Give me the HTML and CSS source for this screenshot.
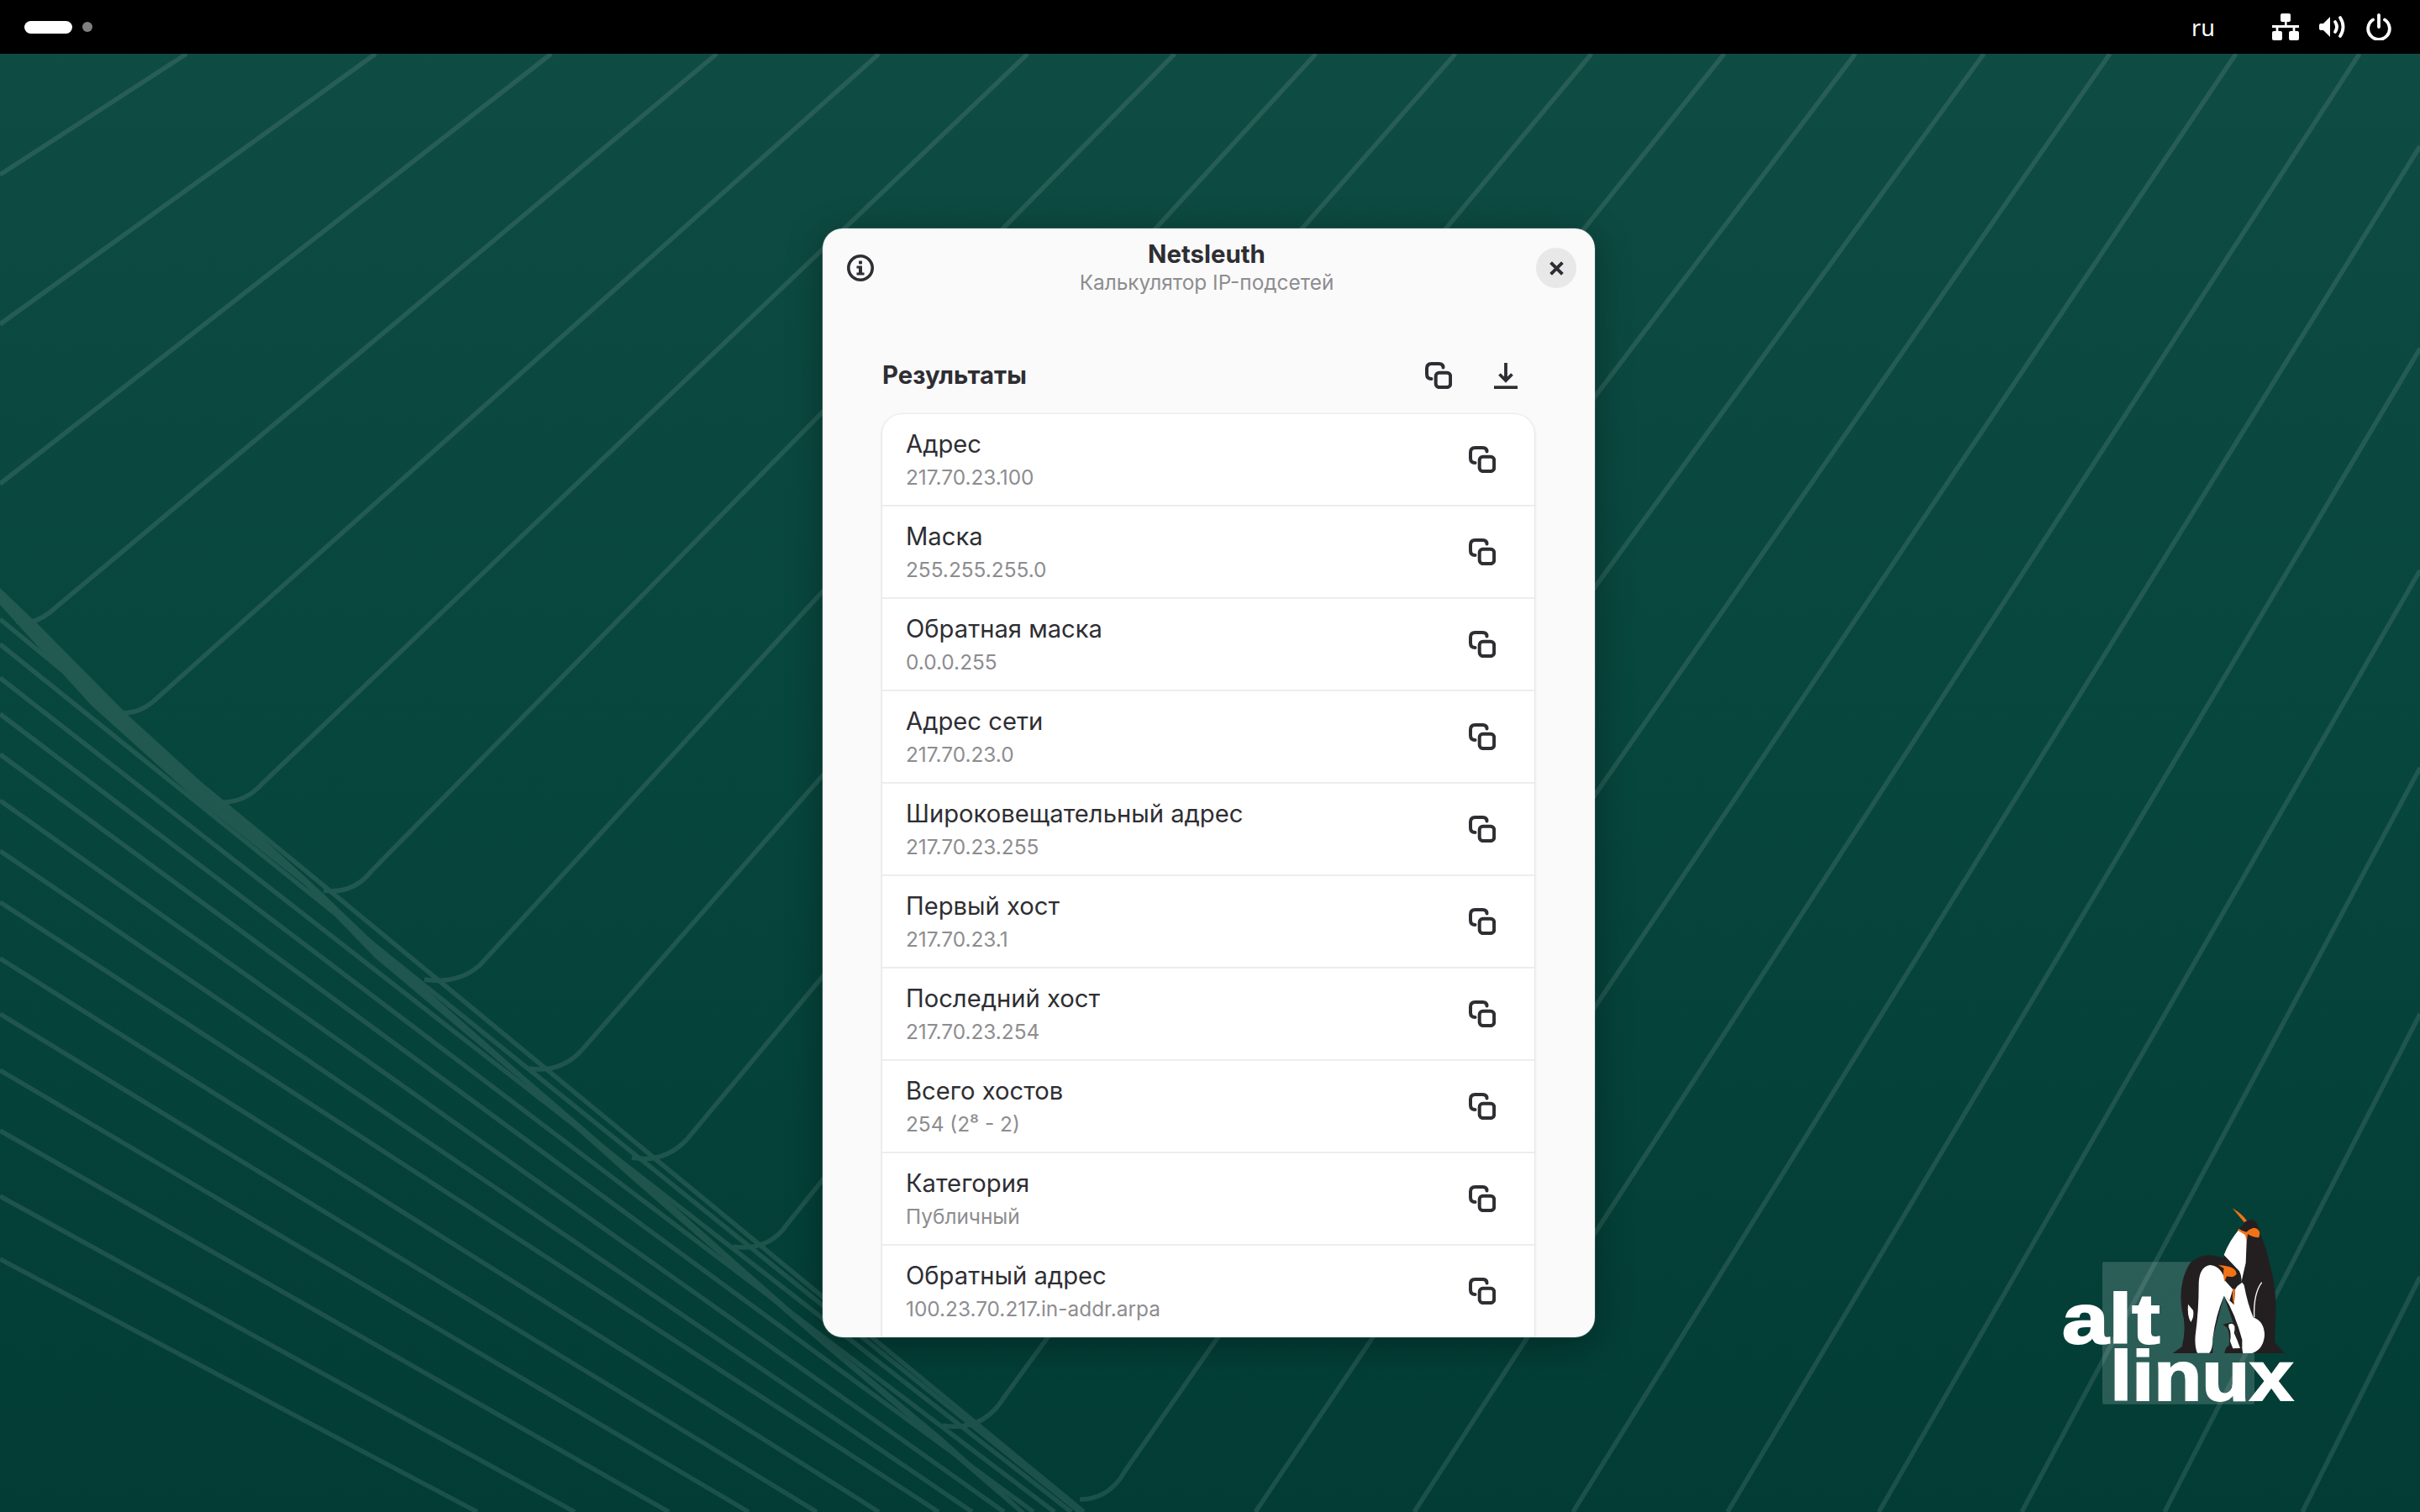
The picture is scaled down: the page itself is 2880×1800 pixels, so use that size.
FILE: index.html
```html
<!DOCTYPE html>
<html lang="ru">

<head>
    <title>Netsleuth</title>
    <meta charset="utf-8">
    <link rel="stylesheet" href="styles.css">
</head>

<body>
    <svg class="icon-defs" width="0" height="0">
        <symbol id="icon-copy" viewBox="0 0 32 32">
            <rect x="12.7" y="12.7" width="17.4" height="17.4" rx="4" fill="none" stroke="currentColor" stroke-width="4" />
            <path d="M7.5 20Q2 20 2 14.5V7.5Q2 2 7.5 2H16.5Q21.5 2 21.5 6.5" fill="none" stroke="currentColor" stroke-width="4" stroke-linecap="round" />
        </symbol>
    </svg>

    <div class="desktop">
        <!-- обои -->
        <svg class="wallpaper" viewBox="0 0 2880 1800">
            <g class="wall-lines">
                <path d="M222 64L0 208" />
                <path d="M447 64L0 386" />
                <path d="M656 64L0 576" />
                <path d="M853 64L58 730Q38 745 20 740" />
                <path d="M1046 64L187 831Q165 852 140 848" />
                <path d="M1223 64L312 933Q290 958 255 955" />
                <path d="M1398 64L442 1037Q420 1065 385 1060" />
                <path d="M1566 64L571 1149Q545 1172 505 1166" />
                <path d="M1732 64L696 1246Q670 1278 630 1272" />
                <path d="M1894 64L817 1357Q790 1385 752 1378" />
                <path d="M2052 64L937 1457Q915 1490 872 1484" />
                <path d="M2208 64L1076 1555Q1050 1592 1000 1588" />
                <path d="M2361 64L1196 1662Q1170 1705 1122 1697" />
                <path d="M2511 64L1339 1751Q1320 1785 1285 1785" />
                <path d="M2661 64L1494 1800" />
                <path d="M2808 64L1683 1800" />
                <path d="M2880 174L1872 1800" />
                <path d="M2880 415L2056 1800" />
                <path d="M2880 679L2236 1800" />
                <path d="M2880 914L2406 1800" />
                <path d="M2880 1207L2576 1800" />
                <path d="M2880 1520L2740 1800" />
                <path d="M0 1499L568 1800" />
                <path d="M0 1424L684 1800" />
                <path d="M0 1346L796 1800" />
                <path d="M0 1274L891 1800" />
                <path d="M0 1207L972 1800" />
                <path d="M0 1141L1046 1800" />
                <path d="M0 1074L1117 1800" />
                <path d="M0 1013L1157 1800" />
                <path d="M0 953L1195 1800" />
                <path d="M0 898L1230 1800" />
                <path d="M0 850L1255 1800" />
                <path d="M0 807L1275 1800" />
                <path d="M0 767L1285 1800" />
                <path d="M0 737L1290 1800" />
                <polygon class="wall-band" points="0,700 45,743 154,853 268,957 384,1063 464,1140 625,1282 762,1400 880,1505 982,1595 1120,1710 1220,1800 1212,1800 1110,1712 975,1598 872,1508 752,1404 625,1290 446,1140 362,1053 228,947 109,840 0,720" />
            </g>
        </svg>

        <div class="logo">
            <svg class="logo-pic" viewBox="0 0 1020 810">
                <rect class="logo-square" x="246" y="247" width="543" height="508" rx="5" />
                <!-- высокий пингвин -->
                <path class="pg-black" d="M755 105Q790 80 805 125L810 150Q830 190 845 260Q868 340 865 440Q860 520 862 535L897 573H750L680 368V225Q700 170 735 130Z" />
                <path class="pg-white" d="M735 130Q700 170 680 222L735 280Q745 300 742 320L758 250L762 150Z" />
                <path class="pg-white" d="M680 368L712 345L745 320L752 330Q765 400 785 445Q825 460 825 510Q820 560 780 573H745V525Q720 430 680 368Z" />
                <path class="pg-line" d="M815 320Q785 360 788 445" />
                <path class="pg-orange" d="M710 55Q745 75 762 100L752 105Q735 85 710 55Z" />
                <path class="pg-orange" d="M730 130L760 140Q770 130 785 125Q805 125 808 145L805 160Q785 160 765 147L762 170L755 150Q740 140 730 135Z" />
                <!-- передний пингвин -->
                <path class="pg-black" d="M497 573L530 550Q548 480 530 420Q515 320 560 250Q610 205 680 235Q730 265 742 310L720 345L716 400L700 385L680 368L640 520V573Z" />
                <path class="pg-white" d="M630 258Q590 265 590 330Q590 420 578 510Q575 550 585 572H628Q640 560 640 520Q650 440 680 368L700 385L712 345L685 315Q670 260 630 258Z" />
                <path class="pg-white" d="M552 398Q548 440 562 462Q575 440 570 420Z" />
                <path class="pg-orange" d="M660 258Q725 262 725 290Q715 305 690 298L682 318Q675 290 680 270Z" />
                <path class="pg-orange" d="M712 342L720 345L716 400Q708 380 712 342Z" />
                <!-- птенец -->
                <path class="pg-black" d="M676 470L695 465Q715 458 722 475Q725 490 722 497Q740 530 748 573H682Q685 550 698 545Q702 505 692 482Z" />
                <path class="pg-white" d="M697 470Q712 462 718 476Q720 492 716 500Q730 530 738 555L712 556L702 530Q708 500 697 480Z" />
                <text class="logo-text" x="102" y="537" textLength="350" lengthAdjust="spacingAndGlyphs">alt</text>
                <text class="logo-text" x="274" y="742" textLength="654" lengthAdjust="spacingAndGlyphs">linux</text>
            </svg>
        </div>

        <div class="topbar">
            <div class="workspaces">
                <span class="ws-active"></span>
                <span class="ws-dot"></span>
            </div>
            <div class="tray">
                <span class="tray-lang">ru</span>
                <svg class="tray-net" viewBox="0 0 32 32">
                    <rect x="10" y="0" width="12" height="10" rx="2" />
                    <rect x="15" y="10" width="2.6" height="6" />
                    <rect x="0" y="14" width="32" height="3" />
                    <rect x="4.6" y="14" width="2.8" height="8" />
                    <rect x="24.6" y="14" width="2.8" height="8" />
                    <rect x="0" y="21" width="12" height="11" rx="2" />
                    <rect x="20" y="21" width="12" height="11" rx="2" />
                </svg>
                <svg class="tray-sound" viewBox="0 0 32 30">
                    <path class="tray-fill" d="M0 13Q0 11 2 11H5L13 3V27L5 19H2Q0 19 0 17Z" />
                    <path class="tray-stroke" d="M19 9Q23 15 19 21" />
                    <path class="tray-stroke" d="M25 4Q32 15 25 26" />
                </svg>
                <svg class="tray-power" viewBox="0 0 30 32">
                    <path class="tray-stroke" d="M8 7.5A12.8 12.8 0 1 0 22 7.5" />
                    <path class="tray-stroke" d="M15 2V16" />
                </svg>
            </div>
        </div>

        <div class="stage">
            <div class="window">
                <div class="header">
                    <svg class="icon-info" viewBox="0 0 32 32">
                        <circle cx="16" cy="16" r="14.2" fill="none" stroke="currentColor" stroke-width="3.6" />
                        <rect x="14" y="7.5" width="4" height="4" rx="1" fill="currentColor" />
                        <path d="M11.5 13.5H18V21.5H20.5V24.5H11.5V21.5H14V16.5H11.5Z" fill="currentColor" />
                    </svg>
                    <div class="header-title">
                        <div class="app-name">Netsleuth</div>
                        <div class="app-sub">Калькулятор IP-подсетей</div>
                    </div>
                    <div class="btn-close">
                        <svg viewBox="0 0 16 16">
                            <path d="M1.5 1.5L14.5 14.5M14.5 1.5L1.5 14.5" fill="none" stroke="currentColor" stroke-width="3.7" />
                        </svg>
                    </div>
                </div>

                <div class="content">
                    <div class="section-head">
                        <h2 class="section-title">Результаты</h2>
                        <svg class="icon-32 head-copy"><use href="#icon-copy" /></svg>
                        <svg class="icon-32 head-save" viewBox="0 0 32 32">
                            <path d="M16 1V22M8.5 14.5L16 22L23.5 14.5" fill="none" stroke="currentColor" stroke-width="3.8" />
                            <rect x="2" y="28.3" width="28" height="3.7" fill="currentColor" />
                        </svg>
                    </div>

                    <div class="result-list">
                        <div class="result-row">
                            <div class="row-text">
                                <div class="row-title">Адрес</div>
                                <div class="row-sub">217.70.23.100</div>
                            </div>
                            <svg class="icon-32"><use href="#icon-copy" /></svg>
                        </div>
                        <div class="result-row">
                            <div class="row-text">
                                <div class="row-title">Маска</div>
                                <div class="row-sub">255.255.255.0</div>
                            </div>
                            <svg class="icon-32"><use href="#icon-copy" /></svg>
                        </div>
                        <div class="result-row">
                            <div class="row-text">
                                <div class="row-title">Обратная маска</div>
                                <div class="row-sub">0.0.0.255</div>
                            </div>
                            <svg class="icon-32"><use href="#icon-copy" /></svg>
                        </div>
                        <div class="result-row">
                            <div class="row-text">
                                <div class="row-title">Адрес сети</div>
                                <div class="row-sub">217.70.23.0</div>
                            </div>
                            <svg class="icon-32"><use href="#icon-copy" /></svg>
                        </div>
                        <div class="result-row">
                            <div class="row-text">
                                <div class="row-title">Широковещательный адрес</div>
                                <div class="row-sub">217.70.23.255</div>
                            </div>
                            <svg class="icon-32"><use href="#icon-copy" /></svg>
                        </div>
                        <div class="result-row">
                            <div class="row-text">
                                <div class="row-title">Первый хост</div>
                                <div class="row-sub">217.70.23.1</div>
                            </div>
                            <svg class="icon-32"><use href="#icon-copy" /></svg>
                        </div>
                        <div class="result-row">
                            <div class="row-text">
                                <div class="row-title">Последний хост</div>
                                <div class="row-sub">217.70.23.254</div>
                            </div>
                            <svg class="icon-32"><use href="#icon-copy" /></svg>
                        </div>
                        <div class="result-row">
                            <div class="row-text">
                                <div class="row-title">Всего хостов</div>
                                <div class="row-sub">254 (2⁸ - 2)</div>
                            </div>
                            <svg class="icon-32"><use href="#icon-copy" /></svg>
                        </div>
                        <div class="result-row">
                            <div class="row-text">
                                <div class="row-title">Категория</div>
                                <div class="row-sub">Публичный</div>
                            </div>
                            <svg class="icon-32"><use href="#icon-copy" /></svg>
                        </div>
                        <div class="result-row">
                            <div class="row-text">
                                <div class="row-title">Обратный адрес</div>
                                <div class="row-sub">100.23.70.217.in-addr.arpa</div>
                            </div>
                            <svg class="icon-32"><use href="#icon-copy" /></svg>
                        </div>
                    </div>
                </div>
            </div>
        </div>
    </div>
</body>

</html>
```

FILE: styles.css
```css
html,
body {
    margin: 0;
    padding: 0;
}

body {
    font-family: "Inter", "Noto Sans", sans-serif;
    color: #2e2e33;
}

.icon-defs {
    position: absolute;
}

.desktop {
    position: relative;
    display: flex;
    flex-direction: column;
    width: 2880px;
    height: 1800px;
    overflow: hidden;
    background: linear-gradient(180deg, #0f4c43 0%, #07463d 50%, #023c35 100%);
}

.wallpaper {
    position: absolute;
    left: 0;
    top: 0;
    width: 2880px;
    height: 1800px;
}

.wall-lines {
    opacity: 0.1;
}

.wall-lines path {
    fill: none;
    stroke: #fff;
    stroke-width: 5.5;
}

.wall-band {
    fill: #fff;
}

.logo {
    position: absolute;
    left: 2420px;
    top: 1420px;
}

.logo-pic {
    display: block;
    width: 340px;
    height: 270px;
}

.logo-square {
    fill: rgba(255, 255, 255, 0.16);
}

.logo-text {
    font-family: "Liberation Sans", sans-serif;
    font-weight: 700;
    font-size: 248px;
    fill: #fff;
    stroke: #fff;
    stroke-width: 6;
}

.pg-black {
    fill: #231f20;
}

.pg-white {
    fill: #fff;
}

.pg-orange {
    fill: #f47216;
}

.pg-line {
    fill: none;
    stroke: #fff;
    stroke-width: 4;
}

/* верхняя панель */
.topbar {
    position: relative;
    display: flex;
    flex: none;
    align-items: center;
    justify-content: space-between;
    height: 64px;
    padding: 0 34px 0 29px;
    background: #000;
}

.workspaces {
    display: flex;
    align-items: center;
    gap: 12px;
}

.ws-active {
    width: 57px;
    height: 15px;
    border-radius: 8px;
    background: #fff;
}

.ws-dot {
    width: 12px;
    height: 12px;
    border-radius: 50%;
    background: #808080;
}

.tray {
    display: flex;
    align-items: center;
    color: #fff;
}

.tray-lang {
    width: 96px;
    padding-top: 1px;
    font-family: "Noto Sans", sans-serif;
    font-size: 27px;
    line-height: 64px;
}

.tray svg {
    display: block;
    fill: #fff;
}

.tray-net {
    width: 32px;
    height: 32px;
    margin-right: 24px;
}

.tray-sound {
    width: 32px;
    height: 30px;
    margin-right: 24px;
}

.tray-power {
    width: 30px;
    height: 32px;
}

.tray .tray-stroke {
    fill: none;
    stroke: #fff;
    stroke-width: 3.8;
    stroke-linecap: round;
}

/* окно */
.stage {
    position: relative;
    display: flex;
    flex: 1;
    justify-content: center;
    padding: 208px 3px 0 0;
    min-height: 0;
}

.window {
    display: flex;
    flex-direction: column;
    width: 919px;
    height: 1320px;
    border-radius: 24px;
    overflow: hidden;
    background: #fafafa;
    box-shadow: 0 0 0 1px rgba(255, 255, 255, 0.12), 0 8px 44px rgba(0, 0, 0, 0.32);
}

.header {
    display: flex;
    flex: none;
    align-items: center;
    justify-content: space-between;
    height: 94px;
    padding: 0 22px 0 29px;
}

.icon-info {
    display: block;
    width: 32px;
    height: 32px;
}

.header-title {
    text-align: center;
    margin-left: 4px;
}

.app-name {
    font-size: 29.4px;
    font-weight: 700;
    line-height: 34px;
}

.app-sub {
    font-size: 24.4px;
    line-height: 32px;
    color: #8d8d90;
}

.btn-close {
    display: flex;
    align-items: center;
    justify-content: center;
    width: 48px;
    height: 48px;
    border-radius: 50%;
    background: #e8e8e8;
}

.btn-close svg {
    display: block;
    width: 17px;
    height: 17px;
}

.content {
    padding: 49px 72px 0 71px;
}

.section-head {
    display: flex;
    align-items: center;
    height: 64px;
    margin-bottom: 14px;
}

.section-title {
    flex: 1;
    margin: 0;
    font-size: 29.3px;
    font-weight: 700;
    line-height: 34px;
}

.icon-32 {
    display: block;
    flex: none;
    width: 32px;
    height: 32px;
}

.head-save {
    margin-left: 48px;
    margin-right: 18px;
}

/* список уходит за нижний край окна */
.result-list {
    padding-bottom: 40px;
    border-radius: 24px;
    background: #fff;
    box-shadow: 0 0 0 1px rgba(0, 0, 0, 0.03), 0 1px 4px rgba(0, 0, 0, 0.12);
}

.result-row {
    display: flex;
    align-items: center;
    justify-content: space-between;
    box-sizing: border-box;
    height: 110px;
    padding: 0 46px 0 28px;
    border-bottom: 2px solid #ededed;
}

.row-title {
    font-size: 29.2px;
    line-height: 36px;
}

.row-sub {
    margin-top: 5px;
    font-size: 24.4px;
    line-height: 32px;
    color: #8d8d90;
}
```
